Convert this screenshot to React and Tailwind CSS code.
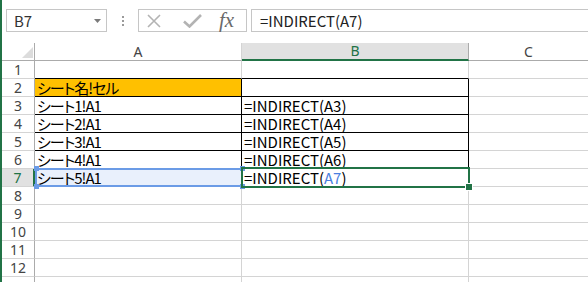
import React from "react";

const jp = "font-['Noto_Sans_CJK_JP',sans-serif] [font-feature-settings:'palt']";

const rows = [
  { n: 1 },
  { n: 2, a: "シート名!セル", fill: true },
  { n: 3, a: "シート1!A1", b: "=INDIRECT(A3)" },
  { n: 4, a: "シート2!A1", b: "=INDIRECT(A4)" },
  { n: 5, a: "シート3!A1", b: "=INDIRECT(A5)" },
  { n: 6, a: "シート4!A1", b: "=INDIRECT(A6)" },
  { n: 7, a: "シート5!A1", b: "=INDIRECT(", ref: "A7", active: true },
  { n: 8 },
  { n: 9 },
  { n: 10 },
  { n: 11 },
  { n: 12 },
  { n: 13, hideLabel: true },
];

const Toolbar = () => (
  <div className="flex h-[43px] items-start pt-[9px]">
    {/* name box */}
    <div className="ml-[4px] flex h-[23px] w-[101px] shrink-0 items-center justify-between border border-[#c6c6c6] pl-[7px] pr-[5px]">
      <span className={`${jp} text-[15px] leading-[17px] text-[#333]`}>B7</span>
      <svg width="7" height="4" viewBox="0 0 7 4">
        <polygon points="0,0 7,0 3.5,4" fill="#7a7a7a" />
      </svg>
    </div>

    {/* grip dots */}
    <div className="ml-[15px] flex h-[23px] w-[2px] shrink-0 flex-col items-center justify-center gap-[2px]">
      <div className="h-[2px] w-[2px] bg-[#9a9a9a]" />
      <div className="h-[2px] w-[2px] bg-[#9a9a9a]" />
      <div className="h-[2px] w-[2px] bg-[#9a9a9a]" />
    </div>

    {/* cancel / enter / fx */}
    <div className="ml-[14px] flex h-[23px] w-[109px] shrink-0 items-center border border-[#c6c6c6] pl-[8px]">
      <svg className="shrink-0" width="14" height="14" viewBox="0 0 14 14">
        <path d="M1 1 L13 13 M13 1 L1 13" stroke="#b3b3b3" strokeWidth="1.6" fill="none" />
      </svg>
      <svg className="ml-[22px] shrink-0" width="19" height="14" viewBox="0 0 19 14">
        <path d="M1 7.5 L6.5 12.5 L18 1" stroke="#b3b3b3" strokeWidth="2.6" fill="none" />
      </svg>
      <span className="ml-[17px] font-['Liberation_Serif',serif] text-[21px] italic leading-none text-[#6a6a6a]">
        fx
      </span>
    </div>

    {/* formula input */}
    <div className="-mr-[4px] ml-[4px] flex h-[23px] min-w-0 flex-1 items-center border border-[#c6c6c6] pl-[8px]">
      <span className={`${jp} text-[15px] leading-[17px] text-[#222]`}>=INDIRECT(A7)</span>
    </div>
  </div>
);

const ColumnHeader = () => (
  <div className="flex h-[18px] font-['Noto_Sans',sans-serif] text-[14px] text-[#444]">
    <div className="flex w-[33px] items-end justify-end border-b border-r border-b-[#ababab] border-r-[#ababab] pb-[2px] pr-[1px]">
      <svg width="11" height="11" viewBox="0 0 11 11">
        <polygon points="11,0 11,11 0,11" fill="#dcdcdc" />
      </svg>
    </div>
    <div className="flex w-[207px] items-center justify-center border-b border-r border-b-[#ababab] border-r-[#d4d4d4] leading-none">
      A
    </div>
    <div className="flex w-[227px] items-center justify-center border-b-2 border-r border-b-[#217346] border-r-[#ababab] bg-[#e1e1e1] leading-none text-[#217346]">
      B
    </div>
    <div className="flex flex-1 items-center justify-center border-b border-b-[#ababab] leading-none">
      C
    </div>
  </div>
);

const Row = ({ r }) => {
  const framed = r.n >= 2 && r.n <= 7;
  const topEdge = r.n === 1;
  const aCls = [
    "relative flex w-[207px] items-center border-b border-r pl-[2px] tracking-[-1px]",
    framed || topEdge ? "border-b-black" : "border-b-[#d4d4d4]",
    framed ? "border-r-black" : "border-r-[#d4d4d4]",
    r.fill ? "bg-[#ffc000]" : "",
    r.active ? "bg-[#e9f0fc]" : "",
  ].join(" ");
  const bCls = [
    "relative flex w-[227px] items-center border-b border-r pl-[2px]",
    framed || topEdge ? "border-b-black" : "border-b-[#d4d4d4]",
    framed ? "border-r-black" : "border-r-[#d4d4d4]",
  ].join(" ");

  return (
    <div className={`flex h-[18px] ${jp} text-[15px] leading-[17px] text-black`}>
      <div
        className={
          r.active
            ? "flex w-[33px] items-center justify-center border-b border-r-2 border-b-[#d4d4d4] border-r-[#217346] bg-[#e1e1e1] font-['Noto_Sans',sans-serif] text-[14px] text-[#217346]"
            : "flex w-[33px] items-center justify-center border-b border-r border-b-[#d4d4d4] border-r-[#ababab] font-['Noto_Sans',sans-serif] text-[14px] text-[#444]"
        }
      >
        {r.hideLabel ? "" : r.n}
      </div>
      <div className={aCls}>
        {r.a}
        {r.active && (
          <>
            <div className="absolute -bottom-[1px] -right-[2px] -top-[1px] left-0 z-10 border-2 border-[#6b9be6]" />
            <div className="absolute -left-[1px] -top-[3px] z-20 h-[5px] w-[5px] bg-[#6b9be6]" />
            <div className="absolute left-[205px] -top-[3px] z-20 h-[5px] w-[5px] bg-[#6b9be6]" />
            <div className="absolute -left-[1px] top-[15px] z-20 h-[5px] w-[5px] bg-[#6b9be6]" />
            <div className="absolute left-[205px] top-[15px] z-20 h-[5px] w-[5px] bg-[#6b9be6]" />
          </>
        )}
      </div>
      <div className={bCls}>
        {r.b}
        {r.ref && <span className="text-[#4a7fe0]">{r.ref}</span>}
        {r.ref && ")"}
        {r.active && (
          <>
            <div className="absolute -bottom-[2px] -left-[1px] -right-[2px] -top-[2px] z-30 border-2 border-[#217346]" />
            <div className="absolute left-[224px] top-[15px] z-40 h-[6px] w-[6px] bg-[#217346] ring-1 ring-white" />
          </>
        )}
      </div>
      <div className="flex-1 border-b border-b-[#d4d4d4]" />
    </div>
  );
};

export default function App() {
  return (
    <div className="h-[282px] w-[588px] overflow-hidden border-l-2 border-[#217346] bg-white">
      <Toolbar />
      <ColumnHeader />
      {rows.map((r) => (
        <Row key={r.n} r={r} />
      ))}
    </div>
  );
}
